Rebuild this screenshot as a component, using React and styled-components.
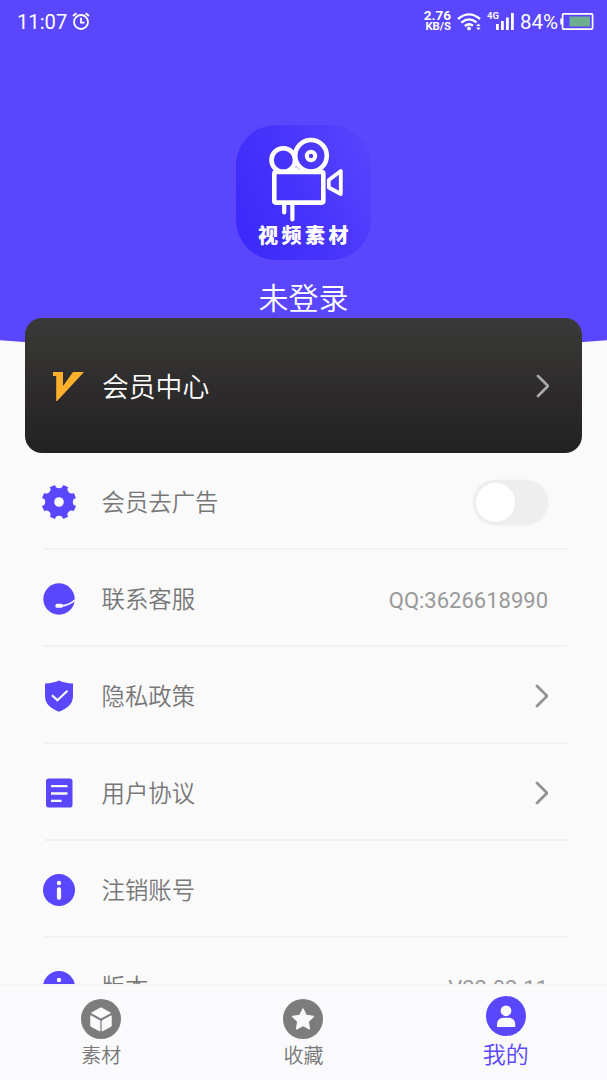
import React, { useState } from 'react';
import styled, { createGlobalStyle } from 'styled-components';

const purple = '#5946FD';
const gray = '#777';

const GlobalStyle = createGlobalStyle`
  body {
    margin: 0;
    background: #FAFAFB;
    font-family: Roboto, "Noto Sans CJK SC", sans-serif;
  }
`;

const Screen = styled.div`
  display: flex;
  flex-direction: column;
  height: 1080px;
  overflow: hidden;
`;

const Header = styled.header`
  flex: none;
  height: 352px;
  display: flex;
  flex-direction: column;
  align-items: center;
  background: ${purple};
  color: #FFF;
  clip-path: ellipse(1190px 352px at 50% 0);
`;

const StatusBar = styled.div`
  display: flex;
  align-items: center;
  justify-content: space-between;
  align-self: stretch;
  box-sizing: border-box;
  height: 43px;
  padding: 0 13px 0 17px;
`;

const StatusGroup = styled.div`
  display: flex;
  align-items: center;
`;

const Clock = styled.span`
  font-size: 20.2px;
  line-height: 24px;
  margin-right: 5px;
`;

const AlarmWrapper = styled.span`
  display: flex;
  margin-bottom: 2px;
`;

const Speed = styled.div`
  display: flex;
  flex-direction: column;
  align-items: flex-end;
  font-size: 13.5px;
  font-weight: 700;
  line-height: 12px;
  margin: 0 6px 1px 0;

  small {
    font-size: 11.3px;
    line-height: 12px;
  }
`;

const Network = styled.span`
  align-self: flex-start;
  font-size: 9.5px;
  font-weight: 700;
  line-height: 10px;
  width: 9px;
  margin: 2px 0 0 6px;
`;

const Percent = styled.span`
  font-size: 20.5px;
  line-height: 24px;
  margin: 0 2px 0 6px;
`;

const Logo = styled.div`
  display: flex;
  flex-direction: column;
  align-items: center;
  width: 135px;
  height: 135px;
  margin-top: 82px;
  border-radius: 40px;
  background: linear-gradient(65deg, #3B29FB 5%, #4633FB 45%, #5843FD 95%);
`;

const LogoText = styled.div`
  font-size: 20px;
  font-weight: 900;
  letter-spacing: 3.5px;
  line-height: 24px;
  margin: -2px 0 0 3px;
  white-space: nowrap;
`;

const UserName = styled.div`
  font-size: 30px;
  font-weight: 350;
  line-height: 40px;
  margin-top: 19px;
`;

const Card = styled.div`
  position: relative;
  flex: none;
  display: flex;
  align-items: center;
  box-sizing: border-box;
  height: 135px;
  margin: -34px 25px 0 25px;
  padding: 0 33px 0 28px;
  border-radius: 17px;
  background: linear-gradient(#383939, #343432 25%, #2E2C2D 50%, #222);
`;

const CardTitle = styled.div`
  flex: 1;
  margin: 4px 0 0 17px;
  font-size: 26.8px;
  font-weight: 350;
  line-height: 36px;
  color: #FFF;
`;

const List = styled.div`
  flex: 1;
  min-height: 0;
  overflow: hidden;
  padding: 0 40px 0 44px;
`;

const Row = styled.div`
  display: flex;
  align-items: center;
  box-sizing: border-box;
  height: 97px;
  padding: 3px 19px 0 0;
  border-bottom: 2px solid #F1F1F2;
`;

const RowIcon = styled.div`
  flex: none;
  display: flex;
  justify-content: center;
  width: 34px;
  margin-left: -2px;
`;

const RowLabel = styled.div`
  flex: 1;
  margin: 2px 0 0 25.5px;
  font-size: 23.4px;
  font-weight: 350;
  line-height: 32px;
  color: ${gray};
`;

const RowValue = styled.div`
  font-size: 22px;
  line-height: 28px;
  color: #999;
  margin-top: 4px;
`;

const Switch = styled.button`
  width: 75px;
  height: 45px;
  padding: 3px;
  border: none;
  border-radius: 23px;
  background: ${props => (props.$on ? purple : '#EEEEEF')};
  box-shadow: 0 0 3px #EEEEEF;
  display: flex;
  justify-content: ${props => (props.$on ? 'flex-end' : 'flex-start')};
`;

const Thumb = styled.span`
  width: 39px;
  height: 39px;
  border-radius: 50%;
  background: #FFF;
`;

const TabBar = styled.nav`
  flex: none;
  display: flex;
  box-sizing: border-box;
  height: 96px;
  border-top: 2px solid #F4F4F5;
  background: #FAFAFC;
`;

const Tab = styled.div`
  flex: 1;
  display: flex;
  flex-direction: column;
  align-items: center;
  padding-top: ${props => (props.$active ? 10 : 13)}px;
  color: ${props => (props.$active ? purple : gray)};
  font-size: ${props => (props.$active ? 23 : 20)}px;
  font-weight: 350;
  line-height: ${props => (props.$active ? 40 : 35)}px;
`;

const AlarmIcon = () => (
  <svg width="18" height="18" viewBox="0 0 18 18" fill="none" stroke="#FFF" strokeWidth="1.8">
    <circle cx="9" cy="10" r="7" />
    <path d="M9 5.8V10.6H12.5M1 4L4.4 1.2M17 4L13.6 1.2" />
  </svg>
);

const WifiIcon = () => (
  <svg width="24" height="18" viewBox="0 0 24 18" fill="none" stroke="#FFF" strokeWidth="2.3">
    <path d="M1 6Q12 -3.2 23 6M4.3 9.6Q12 3.3 19.5 9.4M7.8 13Q12 9.6 16 12.6" />
    <circle cx="12" cy="15.4" r="1.9" fill="#FFF" stroke="none" />
    <path d="M19.2 13L21.4 10.4L23.6 13ZM19.2 14.6L21.4 17.2L23.6 14.6Z" fill="#FFF" stroke="none" />
  </svg>
);

const SignalIcon = () => (
  <svg width="18" height="17" viewBox="0 0 18 17" fill="#FFF">
    <path d="M0 11H2.8V17H0ZM5 8H7.8V17H5ZM10 4.5H12.8V17H10ZM15 0H17.8V17H15Z" />
  </svg>
);

const BatteryIcon = () => (
  <svg width="34" height="18" viewBox="0 0 34 18">
    <rect x="2.6" y="0.9" width="30" height="15.2" rx="1" fill="none" stroke="#FFF" strokeWidth="1.7" />
    <path d="M0.3 5.5H2.3V11.5H0.3Z" fill="#FFF" />
    <rect x="9.5" y="3.5" width="20.5" height="10" fill="#6DAE8E" />
  </svg>
);

const CameraIcon = () => (
  <svg width="135" height="101" viewBox="0 0 135 101" fill="none" stroke="#FFF" strokeWidth="4.6" strokeLinecap="round" strokeLinejoin="round">
    <circle cx="47.3" cy="35" r="11.8" />
    <circle cx="75" cy="30.8" r="15.8" />
    <circle cx="75" cy="31" r="4.2" strokeWidth="4" />
    <path d="M60 43L57 46H63Z" strokeWidth="2" />
    <rect x="38.3" y="47" width="49" height="30.6" rx="1.5" />
    <path d="M92.8 55L104.8 46V69L92.8 62.5Z" strokeWidth="3.8" />
    <path d="M48.2 79V87.5M56.4 79V94.5" strokeWidth="4.2" />
  </svg>
);

const VipIcon = () => (
  <svg width="32" height="30" viewBox="0 0 32 30" fill="#FCB02B">
    <path d="M0 0H10V14L20 0H31L3.2 30V4H0Z" transform="translate(0 1)" />
  </svg>
);

const Chevron = ({ color = '#919193' }) => (
  <svg width="13" height="24" viewBox="0 0 13 24" fill="none" stroke={color} strokeWidth="2.7" strokeLinecap="round">
    <path d="M2 2L12 12L2 22" />
  </svg>
);

// disc with round notches cut between the teeth
const GearIcon = () => (
  <svg width="34" height="34" viewBox="0 0 34 34">
    <circle cx="17" cy="17" r="17.3" fill={purple} />
    {[0, 45, 90, 135, 180, 225, 270, 315].map(angle => (
      <ellipse
        key={angle}
        cx="17"
        cy="-0.4"
        rx="3.8"
        ry="3.6"
        fill="#FAFAFB"
        transform={`rotate(${angle} 17 17)`}
      />
    ))}
    <circle cx="17" cy="17" r="4.8" fill="#FAFAFB" />
  </svg>
);

const ServiceIcon = () => (
  <svg width="32" height="32" viewBox="0 0 32 32">
    <circle cx="16" cy="16" r="15.7" fill={purple} />
    <path d="M18 22.8Q26 22.5 32 17.2" fill="none" stroke="#FAFAFB" strokeWidth="1.7" />
    <rect x="12.4" y="20.8" width="7.4" height="4" rx="1.6" fill="#FAFAFB" />
  </svg>
);

const ShieldIcon = () => (
  <svg width="30" height="32" viewBox="0 0 30 32">
    <path d="M15 0.5Q20.5 3.2 29 3.4V16C29 24 23 28.5 15 31.8C7 28.5 1 24 1 16V3.4Q9.5 3.2 15 0.5Z" fill={purple} />
    <path d="M8 15.2L13.4 20.2L23.5 10.8" fill="none" stroke="#FAFAFB" strokeWidth="2.2" />
  </svg>
);

const DocIcon = () => (
  <svg width="28" height="30" viewBox="0 0 28 30">
    <rect x="1" y="0.5" width="26.5" height="29" rx="2.8" fill={purple} />
    <path d="M6 8.2H22.5M6 15.5H22.5M6 22.8H16.5" stroke="#FAFAFB" strokeWidth="2.3" />
  </svg>
);

const InfoIcon = () => (
  <svg width="32" height="32" viewBox="0 0 32 32">
    <circle cx="16" cy="16" r="16" fill={purple} />
    <circle cx="16" cy="9" r="2.2" fill="#FAFAFB" />
    <rect x="13.9" y="13.2" width="4.2" height="12.6" rx="1.8" fill="#FAFAFB" />
  </svg>
);

const CubeIcon = () => (
  <svg width="40" height="40" viewBox="0 0 40 40" strokeLinejoin="round">
    <circle cx="20" cy="20" r="20" fill="#7C7C7C" />
    <g fill="#FAFAFC" stroke="#FAFAFC">
      <path d="M20 8.8L29.4 13.9L20 19L10.6 13.9Z" />
      <path d="M9.8 16.8L18.9 21.8V32L9.8 27.2Z" />
      <path d="M30.2 16.8L21.1 21.8V32L30.2 27.2Z" />
    </g>
  </svg>
);

const StarIcon = () => (
  <svg width="40" height="40" viewBox="0 0 40 40">
    <circle cx="20" cy="20" r="20" fill="#7C7C7C" />
    <path
      d="M20 10L23.2 16.5L30.4 17.5L25.2 22.6L26.4 29.8L20 26.5L13.6 29.8L14.8 22.6L9.6 17.5L16.8 16.5Z"
      fill="#FAFAFC"
      stroke="#FAFAFC"
      strokeWidth="1.4"
      strokeLinejoin="round"
    />
  </svg>
);

const UserIcon = () => (
  <svg width="40" height="40" viewBox="0 0 40 40">
    <circle cx="20" cy="20" r="20" fill={purple} />
    <circle cx="20" cy="14.8" r="5.4" fill="#FAFAFC" />
    <path d="M11 31V28.5C11 24 14 21.8 17.5 21.8H22.5C26 21.8 29.2 24 29.2 28.5V31Z" fill="#FAFAFC" />
  </svg>
);

const links = [
  { icon: <ServiceIcon />, label: '联系客服', extra: <RowValue>QQ:3626618990</RowValue> },
  { icon: <ShieldIcon />, label: '隐私政策', extra: <Chevron /> },
  { icon: <DocIcon />, label: '用户协议', extra: <Chevron /> },
  { icon: <InfoIcon />, label: '注销账号' },
  { icon: <InfoIcon />, label: '版本', extra: <RowValue>V22.02.11</RowValue> }
];

export default function App() {
  const [noAds, setNoAds] = useState(false);

  return (
    <Screen>
      <GlobalStyle />
      <Header>
        <StatusBar>
          <StatusGroup>
            <Clock>11:07</Clock>
            <AlarmWrapper><AlarmIcon /></AlarmWrapper>
          </StatusGroup>
          <StatusGroup>
            <Speed>
              2.76
              <small>KB/S</small>
            </Speed>
            <WifiIcon />
            <Network>4G</Network>
            <SignalIcon />
            <Percent>84%</Percent>
            <BatteryIcon />
          </StatusGroup>
        </StatusBar>
        <Logo>
          <CameraIcon />
          <LogoText>视频素材</LogoText>
        </Logo>
        <UserName>未登录</UserName>
      </Header>
      <Card>
        <VipIcon />
        <CardTitle>会员中心</CardTitle>
        <Chevron color="#A9A9A9" />
      </Card>
      <List>
        <Row>
          <RowIcon><GearIcon /></RowIcon>
          <RowLabel>会员去广告</RowLabel>
          <Switch $on={noAds} onClick={() => setNoAds(!noAds)}>
            <Thumb />
          </Switch>
        </Row>
        {links.map(item => (
          <Row key={item.label}>
            <RowIcon>{item.icon}</RowIcon>
            <RowLabel>{item.label}</RowLabel>
            {item.extra}
          </Row>
        ))}
      </List>
      <TabBar>
        <Tab>
          <CubeIcon />
          素材
        </Tab>
        <Tab>
          <StarIcon />
          收藏
        </Tab>
        <Tab $active>
          <UserIcon />
          我的
        </Tab>
      </TabBar>
    </Screen>
  );
}
